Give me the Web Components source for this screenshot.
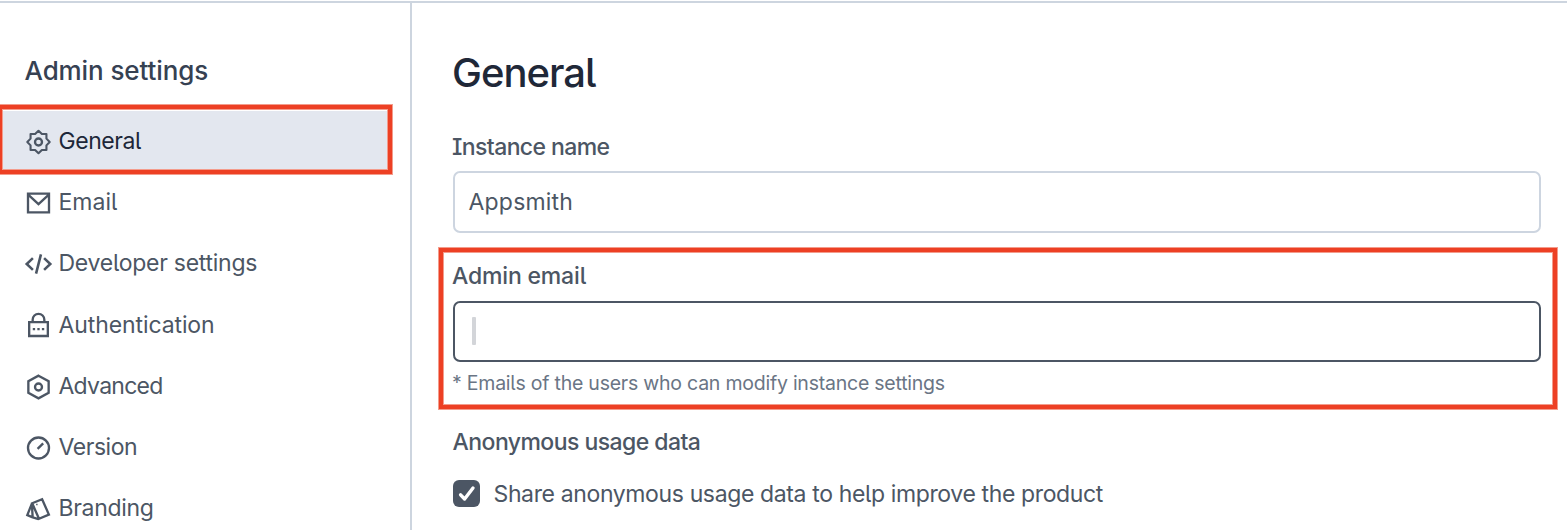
<!DOCTYPE html>
<html lang="en">
<head>
<meta charset="utf-8">
<title>Admin settings</title>
<style>
  body { margin: 0; background: #fff; overflow: hidden; font-family: Inter, "Liberation Sans", sans-serif; font-feature-settings: "cv05", "cv08"; color: #4c5664; }
</style>
</head>
<body>
<settings-page>
  <settings-nav slot="nav" heading="Admin settings">
    <nav-item icon="gear" active style="letter-spacing:-.45px">General</nav-item>
    <nav-item icon="mail">Email</nav-item>
    <nav-item icon="code" style="letter-spacing:-.26px">Developer settings</nav-item>
    <nav-item icon="lock" style="letter-spacing:-.1px;--label-shift:1px">Authentication</nav-item>
    <nav-item icon="hex" style="letter-spacing:-.75px">Advanced</nav-item>
    <nav-item icon="gauge" style="letter-spacing:-.45px">Version</nav-item>
    <nav-item icon="cards" style="letter-spacing:-.3px">Branding</nav-item>
  </settings-nav>
  <page-title>General</page-title>
  <text-field label="Instance name" value="Appsmith" style="--label-ls:-.6px;--value-ls:.2px"></text-field>
  <text-field label="Admin email" focused hint="* Emails of the users who can modify instance settings" style="--label-ls:-.17px"></text-field>
  <check-field label="Anonymous usage data">Share anonymous usage data to help improve the product</check-field>
</settings-page>
<script>
const define = (name, render) => customElements.define(name, class extends HTMLElement {
  connectedCallback() {
    if (!this.shadowRoot) this.attachShadow({ mode: 'open' }).innerHTML = render(this);
  }
});

const ICONS = {
  gear: '<path stroke-width="1.8" stroke-linejoin="round" d="M12 2.4 14.9 5.2H18.8V9.1L21.6 12 18.8 14.9V18.8H14.9L12 21.6 9.1 18.8H5.2V14.9L2.4 12 5.2 9.1V5.2H9.1Z"/><circle cx="12" cy="12" r="3"/>',
  mail: '<path d="M3 4H21V20H3ZM3.6 5.2 12 13 20.4 5.2"/>',
  code: '<path stroke-width="2.2" d="M7.2 7 1.9 12 7.2 17M16.8 7 22.1 12 16.8 17M14.1 3.8 9.9 20.2"/>',
  lock: '<path d="M4 9.6H20V21.4H4ZM7 9.3V7.4a5 5 0 0 1 10 0V9.3"/><path d="M7.1 15.5h2M11 15.5h2M14.9 15.5h2"/>',
  hex: '<path d="M12 2.3 20.7 7.1V16.9L12 21.7 3.3 16.9V7.1Z"/><circle cx="12" cy="12" r="3"/>',
  gauge: '<circle cx="12" cy="12" r="9"/><path d="M11.2 12.8 16 8"/>',
  cards: '<path d="M6.6 7.1 15.1 3.6 20.9 16.8 12.4 20.4ZM6.4 7.2 2.4 17.2 7 19.2M6.4 9 7 19.2 12 20.6"/><path stroke-width="1.3" d="M10 8.2h1.2"/>'
};

define('settings-page', () => `<style>
  :host { display: flex; height: 530px; box-sizing: border-box; border-top: 2px solid #cdd5df; margin-top: 1px; overflow: hidden; }
  aside { width: 410px; border-right: 2px solid #cdd5df; flex: none; }
  main { flex: 1; padding: 46px 26px 0 41px; min-width: 0; }
  </style><aside><slot name="nav"></slot></aside><main><slot></slot></main>`);

define('settings-nav', el => `<style>
  :host { display: block; }
  h2 { margin: 0; padding: 51px 0 0 24.5px; height: 56px; font: 500 26px/34px Inter, sans-serif; letter-spacing: -.1px; color: #364152; }
  </style><h2>${el.getAttribute('heading')}</h2><slot></slot>`);

define('nav-item', el => `<style>
  :host { display: flex; align-items: center; gap: 6.5px; height: 61.25px; padding-left: 24px; box-sizing: border-box; font-size: 23px; line-height: 32px; position: relative; }
  :host([active]) { margin-right: 20px; color: #1d2739; background: #e3e7ef; box-shadow: inset 0 1px #fff; }
  svg { width: 28px; height: 28px; flex: none; margin-top: 2px; fill: none; stroke: #4c5664; stroke-width: 2; overflow: visible; }
  span { padding-top: var(--label-shift, 0); }
  .mark { position: absolute; left: -2px; top: -5px; right: -2px; bottom: -2.75px; border: 4px solid #ed4024; box-shadow: 0 0 0 1px #f39c8c, inset 0 0 0 1px #f39c8c; }
  </style><svg viewBox="-.43 0 24 24">${ICONS[el.getAttribute('icon')]}</svg><span><slot></slot></span>${el.hasAttribute('active') ? '<div class="mark"></div>' : ''}`);

define('page-title', () => `<style>
  :host { display: block; font-size: 40px; font-weight: 500; line-height: 48px; letter-spacing: -1px; color: #1f2838; margin: 0 0 35px -1px; }
  </style><slot></slot>`);

define('text-field', el => `<style>
  :host { display: block; position: relative; height: 129px; }
  :host([focused]) { height: 166px; }
  label { display: block; font-size: 23px; font-weight: 500; line-height: 30px; letter-spacing: var(--label-ls); margin: 0 0 9px -1px; }
  :host([focused]) label { margin-bottom: 10px; }
  .box { height: 62px; box-sizing: border-box; border: 2px solid #cdd5e0; border-radius: 7px; padding: 0 13.5px; display: flex; align-items: center; font-size: 23px; letter-spacing: var(--value-ls); }
  :host([focused]) .box { border-color: #4c5664; height: 61px; padding-left: 17px; }
  .caret { width: 4px; height: 28px; border-radius: 1px; background: #d3d5d9; margin-bottom: 1px; }
  .hint { font-size: 19.5px; line-height: 26px; letter-spacing: -.23px; color: #6a7585; margin: 8px 0 0 -1px; }
  .mark { position: absolute; left: -14px; right: -16px; top: -13px; height: 153px; border: 4px solid #ed4024; box-shadow: 0 0 0 1px #f39c8c, inset 0 0 0 1px #f39c8c; }
  </style><label>${el.getAttribute('label')}</label>
  <div class="box">${el.hasAttribute('focused') ? '<i class="caret"></i>' : el.getAttribute('value')}</div>
  ${el.hasAttribute('hint') ? `<div class="hint">${el.getAttribute('hint')}</div><div class="mark"></div>` : ''}`);

define('check-field', el => `<style>
  :host { display: block; }
  .label { font-size: 23px; font-weight: 500; line-height: 30px; letter-spacing: -.55px; margin: 0 0 22px -.5px; }
  .row { display: flex; align-items: flex-start; gap: 13.5px; font-size: 23px; line-height: 30px; letter-spacing: -.37px; }
  svg { width: 27px; height: 27px; flex: none; margin-top: 1px; }
  </style><div class="label">${el.getAttribute('label')}</div>
  <div class="row"><svg viewBox="0 0 27 27"><rect width="27" height="27" rx="6" fill="#4c5664"/><path d="M7.6 14.8 11.6 19 20 8" fill="none" stroke="#fff" stroke-width="3.4" stroke-linecap="round" stroke-linejoin="round"/></svg><span><slot></slot></span></div>`);
</script>
</body>
</html>
